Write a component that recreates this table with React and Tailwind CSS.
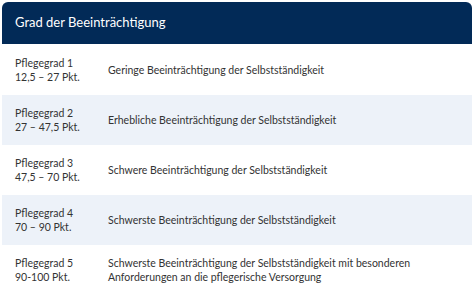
const rows = [
  { grad: "Pflegegrad 1", pkt: "12,5 – 27 Pkt.", text: "Geringe Beeinträchtigung der Selbstständigkeit" },
  { grad: "Pflegegrad 2", pkt: "27 – 47,5 Pkt.", text: "Erhebliche Beeinträchtigung der Selbstständigkeit" },
  { grad: "Pflegegrad 3", pkt: "47,5 – 70 Pkt.", text: "Schwere Beeinträchtigung der Selbstständigkeit" },
  { grad: "Pflegegrad 4", pkt: "70 – 90 Pkt.", text: "Schwerste Beeinträchtigung der Selbstständigkeit" },
  {
    grad: "Pflegegrad 5",
    pkt: "90-100 Pkt.",
    text: "Schwerste Beeinträchtigung der Selbstständigkeit mit besonderen Anforderungen an die pflegerische Versorgung",
  },
];

export default function App() {
  return (
    <div className="w-[474px] h-[299px] bg-white pt-[2px] px-[2px] overflow-hidden font-['Lato',sans-serif] text-[#333]">
      <div className="h-[42px] bg-[#022a57] rounded-t-[6px] flex items-center px-[13px]">
        <h2 className="text-white text-[13px]">Grad der Beeinträchtigung</h2>
      </div>
      {rows.map((r, i) => (
        <div
          key={r.grad}
          className={`flex items-center px-[13px] text-[10.5px] leading-[14px] ${
            i === 0 ? "h-[51px]" : "h-[50px]"
          } ${i % 2 === 1 ? "bg-[#edf2f9]" : "bg-white"}`}
        >
          <div className="w-[93px] shrink-0">
            <div>{r.grad}</div>
            <div>{r.pkt}</div>
          </div>
          <div className="w-[310px]">{r.text}</div>
        </div>
      ))}
    </div>
  );
}
